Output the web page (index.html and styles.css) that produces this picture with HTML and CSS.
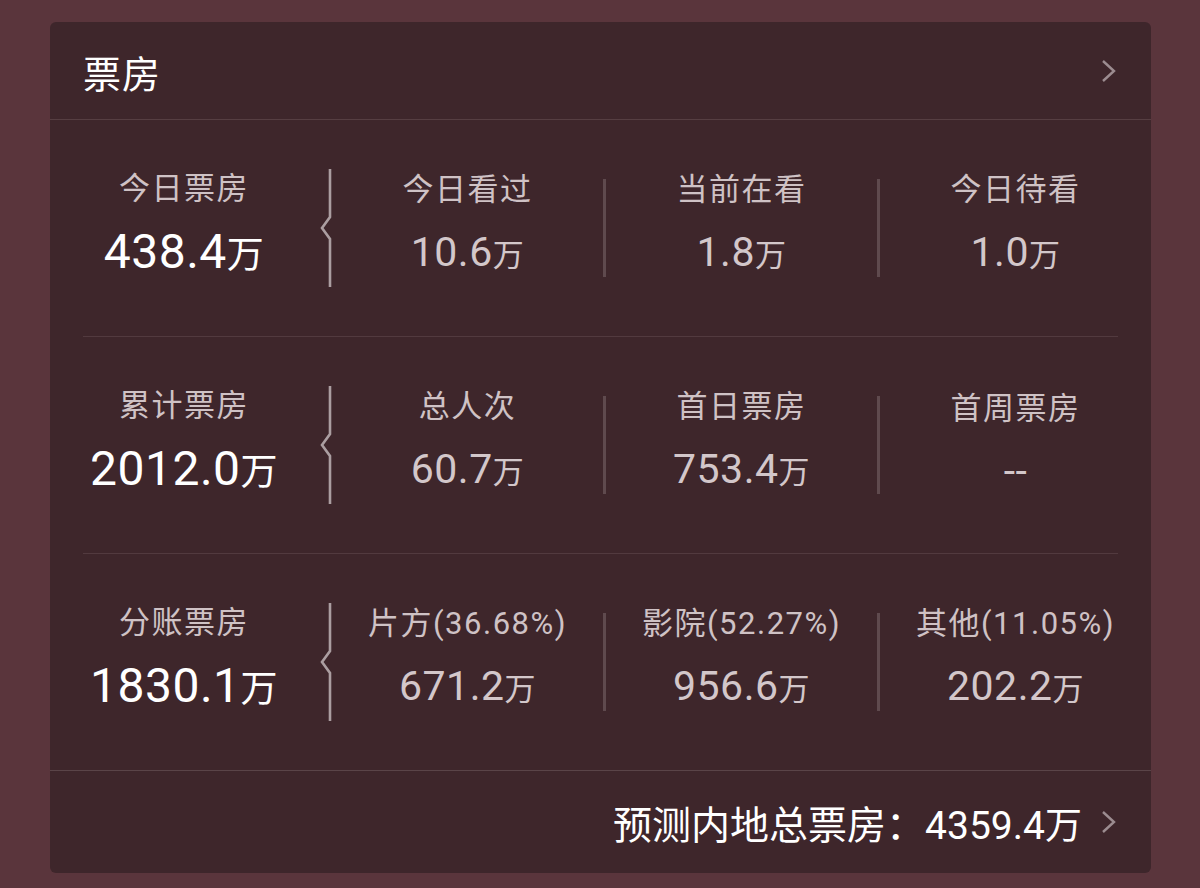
FILE: index.html
```html
<!DOCTYPE html>
<html lang="zh-CN">
<head>
<meta charset="utf-8">
<link rel="stylesheet" href="styles.css">
</head>
<body>
<div class="card">
  <div class="header">
    <span class="title">票房</span>
    <svg class="chev" width="16" height="24" viewBox="0 0 16 24"><path d="M2 2 L13 12 L2 22" fill="none" stroke="#9c8c90" stroke-width="2.4"/></svg>
  </div>
  <div class="stats">
    <div class="row">
      <div class="main">
        <div class="lbl">今日票房</div>
        <div class="big">438.4<span class="u">万</span></div>
      </div>
      <svg class="brace" width="14" height="118" viewBox="0 0 14 118"><path d="M12 0 V48 L4 59 L12 70 V118" fill="none" stroke="#ab9ea1" stroke-width="2.6"/></svg>
      <div class="col"><div class="lbl">今日看过</div><div class="val">10.6<span class="u">万</span></div></div>
      <div class="vline"></div>
      <div class="col"><div class="lbl">当前在看</div><div class="val">1.8<span class="u">万</span></div></div>
      <div class="vline"></div>
      <div class="col"><div class="lbl">今日待看</div><div class="val">1.0<span class="u">万</span></div></div>
    </div>
    <div class="sep"></div>
    <div class="row">
      <div class="main">
        <div class="lbl">累计票房</div>
        <div class="big">2012.0<span class="u">万</span></div>
      </div>
      <svg class="brace" width="14" height="118" viewBox="0 0 14 118"><path d="M12 0 V48 L4 59 L12 70 V118" fill="none" stroke="#ab9ea1" stroke-width="2.6"/></svg>
      <div class="col"><div class="lbl">总人次</div><div class="val">60.7<span class="u">万</span></div></div>
      <div class="vline"></div>
      <div class="col"><div class="lbl">首日票房</div><div class="val">753.4<span class="u">万</span></div></div>
      <div class="vline"></div>
      <div class="col"><div class="lbl">首周票房</div><div class="val">--</div></div>
    </div>
    <div class="sep"></div>
    <div class="row">
      <div class="main">
        <div class="lbl">分账票房</div>
        <div class="big">1830.1<span class="u">万</span></div>
      </div>
      <svg class="brace" width="14" height="118" viewBox="0 0 14 118"><path d="M12 0 V48 L4 59 L12 70 V118" fill="none" stroke="#ab9ea1" stroke-width="2.6"/></svg>
      <div class="col"><div class="lbl">片方(36.68%)</div><div class="val">671.2<span class="u">万</span></div></div>
      <div class="vline"></div>
      <div class="col"><div class="lbl">影院(52.27%)</div><div class="val">956.6<span class="u">万</span></div></div>
      <div class="vline"></div>
      <div class="col"><div class="lbl">其他(11.05%)</div><div class="val">202.2<span class="u">万</span></div></div>
    </div>
  </div>
  <div class="footer">
    <span class="pred">预测内地总票房：4359.4<span class="u2">万</span></span>
    <svg class="chev" width="16" height="24" viewBox="0 0 16 24"><path d="M2 2 L13 12 L2 22" fill="none" stroke="#9c8c90" stroke-width="2.4"/></svg>
  </div>
</div>
</body>
</html>
```
FILE: styles.css
```css
html, body {
  margin: 0;
  padding: 0;
}
body {
  background: #5a353c;
  width: 1200px;
  height: 888px;
  overflow: hidden;
  font-family: Roboto, "Noto Sans CJK SC", sans-serif;
}
.card {
  margin: 22px 49px 0 50px;
  height: 851px;
  background: #3e262b;
  border-radius: 6px;
  display: flex;
  flex-direction: column;
}
.header {
  height: 98px;
  border-bottom: 1px solid #563e42;
  display: flex;
  align-items: center;
  justify-content: space-between;
  padding: 0 34px 0 33px;
  box-sizing: border-box;
}
.title {
  color: #ffffff;
  font-size: 38px;
  letter-spacing: 1px;
  position: relative;
  top: 1px;
}
.chev {
  display: block;
}
.stats {
  display: flex;
  flex-direction: column;
}
.row {
  height: 216px;
  display: flex;
  align-items: center;
}
.sep {
  height: 1px;
  background: #523a3f;
  margin: 0 33px;
}
.main {
  width: 268px;
  display: flex;
  flex-direction: column;
  align-items: center;
  padding-bottom: 4px;
}
.brace {
  display: block;
  flex: none;
}
.col {
  flex: 1;
  display: flex;
  flex-direction: column;
  align-items: center;
  padding-bottom: 4px;
}
.vline {
  width: 3px;
  height: 98px;
  background: #5f4a4e;
  flex: none;
}
.lbl {
  font-size: 31px;
  color: #cfc2c5;
  line-height: 36px;
  letter-spacing: 1.5px;
}
.val {
  font-size: 41px;
  color: #d3c7ca;
  line-height: 48px;
  margin-top: 20px;
  letter-spacing: 0.5px;
}
.big {
  font-size: 48px;
  color: #ffffff;
  line-height: 52px;
  margin-top: 19px;
  letter-spacing: 0.5px;
}
.val .u {
  font-size: 31px;
}
.big .u {
  font-size: 37px;
}
.footer {
  flex: 1;
  border-top: 1px solid #5a4448;
  display: flex;
  align-items: center;
  justify-content: flex-end;
  gap: 19px;
  padding: 0 34px 0 33px;
}
.pred {
  color: #ffffff;
  font-size: 39px;
}
.u2 {
  font-size: 37px;
}
```
